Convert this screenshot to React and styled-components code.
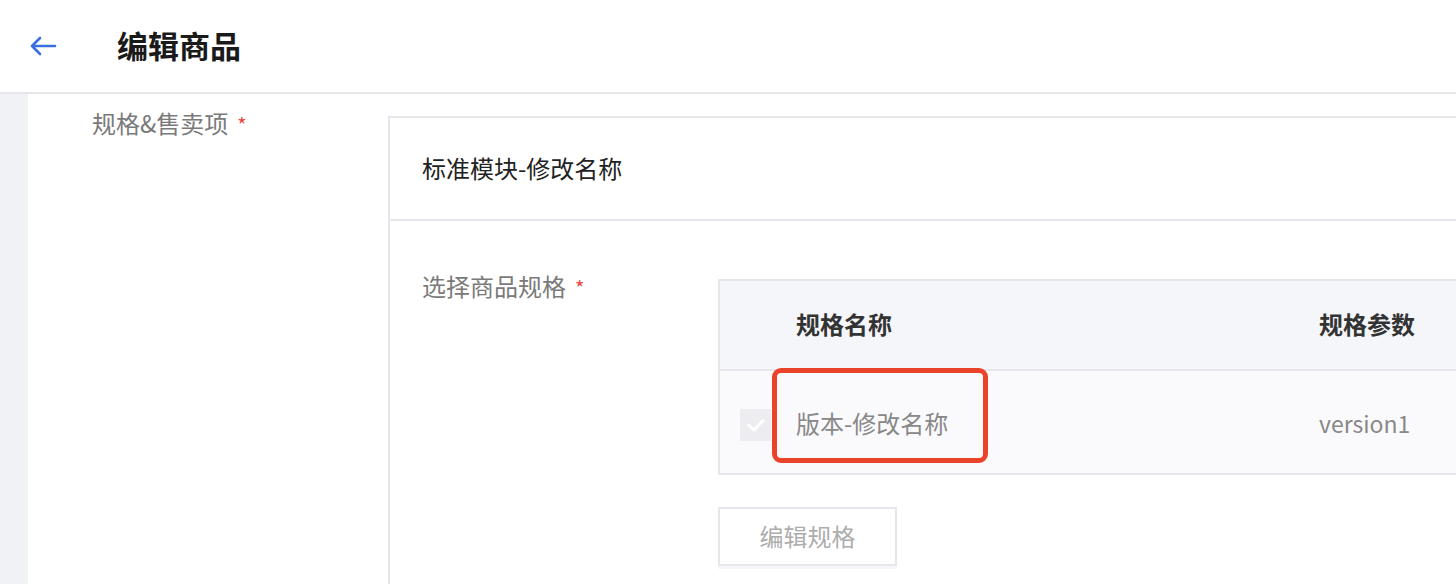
import React from "react";
import styled, { createGlobalStyle } from "styled-components";

const GlobalStyle = createGlobalStyle`
  html, body {
    margin: 0;
    padding: 0;
    background: #fff;
    font-family: "Noto Sans CJK SC", "Noto Sans", sans-serif;
    overflow: hidden;
  }
`;

const Page = styled.div`
  width: 1456px;
  height: 584px;
  overflow: hidden;
  display: flex;
  flex-direction: column;
`;

const Header = styled.header`
  height: 92px;
  flex: none;
  display: flex;
  align-items: center;
  border-bottom: 2px solid #e6e6ec;
  padding-left: 29px;
`;

const BackButton = styled.button`
  border: none;
  background: none;
  padding: 0;
  width: 28px;
  height: 24px;
  display: flex;
  align-items: center;
  cursor: pointer;
`;

const Title = styled.h1`
  margin: 0 0 3px 60px;
  font-size: 31px;
  font-weight: 700;
  color: #1a1a1a;
  line-height: 40px;
`;

const Main = styled.div`
  flex: 1;
  display: flex;
  min-height: 0;
`;

const SideStrip = styled.div`
  width: 28px;
  flex: none;
  background: #f1f2f6;
`;

const Content = styled.div`
  flex: 1;
  display: flex;
  padding: 22px 0 0 64px;
  overflow: hidden;
`;

const FieldLabel = styled.div`
  width: ${(p) => p.width}px;
  flex: none;
  font-size: 24px;
  line-height: 30px;
  color: #7a7a7a;
  margin-top: ${(p) => p.offset}px;
  white-space: nowrap;

  span {
    color: #e5483a;
    font-size: 20px;
    margin-left: 9px;
  }
`;

const Card = styled.div`
  flex: none;
  width: 1120px;
  border: 2px solid #e6e6ec;
  border-right: none;
  border-bottom: none;
`;

const CardHeader = styled.div`
  height: 103px;
  box-sizing: border-box;
  padding: 0 0 3px 32px;
  display: flex;
  align-items: center;
  font-size: 24px;
  color: #222;
  border-bottom: 2px solid #e6e6ec;
`;

const CardBody = styled.div`
  display: flex;
  padding: 58px 0 0 32px;
`;

const SpecColumn = styled.div`
  flex: 1;
  display: flex;
  flex-direction: column;
  align-items: flex-start;
`;

const Table = styled.div`
  width: 100%;
  border: 2px solid #e6e6ec;
  border-right: none;
`;

const Row = styled.div`
  display: grid;
  grid-template-columns: 76px 523px 1fr;
  align-items: center;
  height: ${(p) => p.height}px;
  background: ${(p) => (p.head ? "#f5f6fa" : "#fafafc")};
  border-bottom: ${(p) => (p.head ? "2px solid #e6e6ec" : "none")};
  box-sizing: border-box;
`;

const HeadCell = styled.div`
  font-size: 24px;
  font-weight: 700;
  color: #333;
  line-height: 30px;
  margin-top: -3px;
`;

const Cell = styled.div`
  position: relative;
  font-size: ${(p) => p.size || 24}px;
  color: #888;
  line-height: 30px;
  margin-top: ${(p) => p.offset || 0}px;
`;

const CheckCell = styled.div`
  padding-left: 20px;
  display: flex;
  align-items: center;
  margin-top: 5px;
`;

const Checkbox = styled.span`
  width: 31px;
  height: 32px;
  background: #ededf1;
  display: flex;
  align-items: center;
  justify-content: center;
`;

const Highlight = styled.div`
  position: absolute;
  left: -24px;
  top: -40px;
  width: 216px;
  height: 95px;
  box-sizing: border-box;
  border: 5px solid #e9432a;
  border-radius: 9px;
  pointer-events: none;
`;

const EditButton = styled.button`
  margin-top: 32px;
  width: 179px;
  height: 59px;
  padding: 0 0 3px;
  border: 2px solid #e6e6ec;
  background: #fff;
  color: #adadad;
  font-family: inherit;
  font-size: 24px;
  box-shadow: 0 3px 0 #f7f7fa;
  cursor: not-allowed;
`;

function BackArrow() {
  return (
    <svg width="28" height="22" viewBox="0 0 28 22" fill="none">
      <path
        d="M26 11H3M11 3L3 11L11 19"
        stroke="#3b6fdf"
        strokeWidth="2.6"
        strokeLinecap="round"
        strokeLinejoin="round"
      />
    </svg>
  );
}

function CheckMark() {
  return (
    <svg width="20" height="16" viewBox="0 0 20 16" fill="none">
      <path
        d="M3 8.5L8 13L17 3.5"
        stroke="#fff"
        strokeWidth="3"
        strokeLinecap="round"
        strokeLinejoin="round"
      />
    </svg>
  );
}

const specs = [{ id: 1, name: "版本-修改名称", value: "version1" }];

export default function App() {
  return (
    <Page>
      <GlobalStyle />
      <Header>
        <BackButton aria-label="返回">
          <BackArrow />
        </BackButton>
        <Title>编辑商品</Title>
      </Header>
      <Main>
        <SideStrip />
        <Content>
          <FieldLabel width={296} offset={-8}>
            规格&售卖项<span>*</span>
          </FieldLabel>
          <Card>
            <CardHeader>标准模块-修改名称</CardHeader>
            <CardBody>
              <FieldLabel width={296} offset={-8}>
                选择商品规格<span>*</span>
              </FieldLabel>
              <SpecColumn>
                <Table>
                  <Row head height={90}>
                    <div />
                    <HeadCell>规格名称</HeadCell>
                    <HeadCell>规格参数</HeadCell>
                  </Row>
                  {specs.map((s) => (
                    <Row key={s.id} height={102}>
                      <CheckCell>
                        <Checkbox>
                          <CheckMark />
                        </Checkbox>
                      </CheckCell>
                      <Cell offset={1}>
                        {s.name}
                        <Highlight />
                      </Cell>
                      <Cell offset={1} size={23}>
                        {s.value}
                      </Cell>
                    </Row>
                  ))}
                </Table>
                <EditButton type="button">编辑规格</EditButton>
              </SpecColumn>
            </CardBody>
          </Card>
        </Content>
      </Main>
    </Page>
  );
}
